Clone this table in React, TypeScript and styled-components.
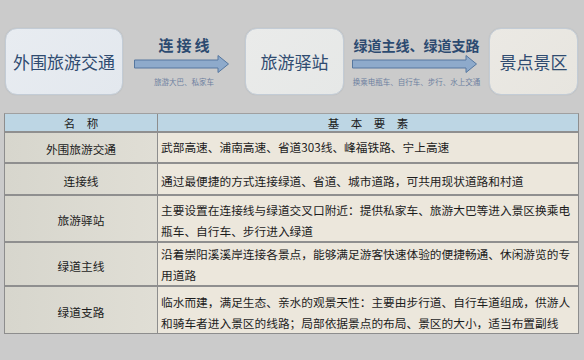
import styled, { createGlobalStyle } from 'styled-components';

const GlobalStyle = createGlobalStyle`
  html, body {
    margin: 0;
    padding: 0;
    background: #cbcbcb;
  }
  body {
    font-family: "Noto Sans CJK SC", "Noto Sans", sans-serif;
  }
`;

const Page = styled.div`
  display: flex;
  flex-direction: column;
  width: 584px;
  height: 360px;
  padding-top: 28px;
  box-sizing: border-box;
  overflow: hidden;
  background: #cbcbcb;
`;

const FlowRow = styled.div`
  display: grid;
  grid-template-columns: 118px 122px 99px 145px 89px;
  height: 67px;
  flex: none;
  margin-left: 5px;
`;

interface StopProps {
  $tone: string;
}

const Stop = styled.div<StopProps>`
  display: flex;
  align-items: center;
  justify-content: center;
  border-radius: 12px;
  border: 1px solid #c3ccd6;
  background: ${(props) => props.$tone};
  box-shadow: 0 0 1px rgba(120, 130, 140, 0.4);
  color: #2f4b70;
  font-size: 17px;
  white-space: nowrap;
`;

const Link = styled.div`
  display: flex;
  flex-direction: column;
  align-items: center;
  padding-top: 8px;
`;

interface LinkLabelProps {
  $spaced?: boolean;
}

const LinkLabel = styled.div<LinkLabelProps>`
  height: 18px;
  line-height: 18px;
  font-size: ${(props) => (props.$spaced ? '15px' : '14px')};
  letter-spacing: ${(props) => (props.$spaced ? '3px' : '0')};
  margin-left: ${(props) => (props.$spaced ? '3px' : '0')};
  font-weight: 700;
  color: #2c4a70;
  white-space: nowrap;
`;

const ArrowSvg = styled.svg`
  display: block;
  margin: 1px 5px 0 0;
`;

const LinkNote = styled.div`
  margin-top: 4px;
  line-height: 10px;
  font-size: 7.5px;
  color: #6d80a0;
  white-space: nowrap;
`;

const Table = styled.div`
  display: flex;
  flex-direction: column;
  flex: none;
  width: 575px;
  height: 221px;
  box-sizing: border-box;
  overflow: hidden;
  margin: 18px 0 0 4px;
  border: 1px solid #8d8d8d;
  border-top-color: #a0a0a0;
  font-size: 11.7px;
  color: #1c1c1c;
`;

interface RowProps {
  $h: number;
  $head?: boolean;
}

const Row = styled.div<RowProps>`
  display: grid;
  grid-template-columns: 152px 1fr;
  grid-template-rows: minmax(0, 1fr);
  flex: none;
  height: ${(props) => props.$h}px;
  box-sizing: border-box;
  overflow: hidden;
  border-top: ${(props) => (props.$head ? '0' : '2px solid #8f8f8f')};
`;

const HeadCell = styled.div`
  display: flex;
  align-items: center;
  justify-content: center;
  background: #bdd6e4;
  font-size: 11.5px;
  & + & {
    border-left: 1px solid #8d8d8d;
  }
`;

const NameCell = styled.div`
  display: flex;
  align-items: center;
  justify-content: center;
  min-height: 0;
  padding-top: 2px;
  background: linear-gradient(90deg, #d7d6cd, #e0ded5);
`;

interface TextCellProps {
  $pad: number;
}

const TextCell = styled.div<TextCellProps>`
  display: flex;
  flex-direction: column;
  min-height: 0;
  padding: ${(props) => props.$pad}px 0 0 3px;
  border-left: 1px solid #8d8d8d;
  background: #ece7dc;
  line-height: 21px;
`;

const Line = styled.span`
  height: 21px;
  white-space: nowrap;
`;

function Arrow({ width }: { width: number }) {
  const h = width - 11;
  return (
    <ArrowSvg width={width} height={18} viewBox={`0 0 ${width} 18`}>
      <polygon
        points={`0.5,5 ${h},5 ${h},0.5 ${width - 0.5},9 ${h},17.5 ${h},13 0.5,13`}
        fill="#8eaacb"
        stroke="#56779f"
        strokeWidth="1"
      />
    </ArrowSvg>
  );
}

const rows = [
  { name: '外围旅游交通', h: 31, pad: 3, lines: ['武部高速、浦南高速、省道303线、峰福铁路、宁上高速'] },
  { name: '连接线', h: 32, pad: 6, lines: ['通过最便捷的方式连接绿道、省道、城市道路，可共用现状道路和村道'] },
  {
    name: '旅游驿站',
    h: 47,
    pad: 3,
    lines: ['主要设置在连接线与绿道交叉口附近：提供私家车、旅游大巴等进入景区换乘电', '瓶车、自行车、步行进入绿道'],
  },
  {
    name: '绿道主线',
    h: 44,
    pad: 0,
    lines: ['沿着崇阳溪溪岸连接各景点，能够满足游客快速体验的便捷畅通、休闲游览的专', '用道路'],
  },
  {
    name: '绿道支路',
    h: 48,
    pad: 4,
    lines: ['临水而建，满足生态、亲水的观景天性：主要由步行道、自行车道组成，供游人', '和骑车者进入景区的线路；局部依据景点的布局、景区的大小，适当布置副线'],
  },
];

export default function App() {
  return (
    <Page>
      <GlobalStyle />
      <FlowRow>
        <Stop $tone="linear-gradient(135deg, #e8ecf1, #e3e8ee)">外围旅游交通</Stop>
        <Link>
          <LinkLabel $spaced>连接线</LinkLabel>
          <Arrow width={95} />
          <LinkNote>旅游大巴、私家车</LinkNote>
        </Link>
        <Stop $tone="linear-gradient(135deg, #eaebea, #e6e8e7)">旅游驿站</Stop>
        <Link>
          <LinkLabel>绿道主线、绿道支路</LinkLabel>
          <Arrow width={125} />
          <LinkNote>换乘电瓶车、自行车、步行、水上交通</LinkNote>
        </Link>
        <Stop $tone="linear-gradient(135deg, #ebe9e4, #e7e5df)">景点景区</Stop>
      </FlowRow>
      <Table>
        <Row $h={17} $head>
          <HeadCell>名　称</HeadCell>
          <HeadCell>基　本　要　素</HeadCell>
        </Row>
        {rows.map((r) => (
          <Row $h={r.h} key={r.name}>
            <NameCell>{r.name}</NameCell>
            <TextCell $pad={r.pad}>
              {r.lines.map((l) => (
                <Line key={l}>{l}</Line>
              ))}
            </TextCell>
          </Row>
        ))}
      </Table>
    </Page>
  );
}
